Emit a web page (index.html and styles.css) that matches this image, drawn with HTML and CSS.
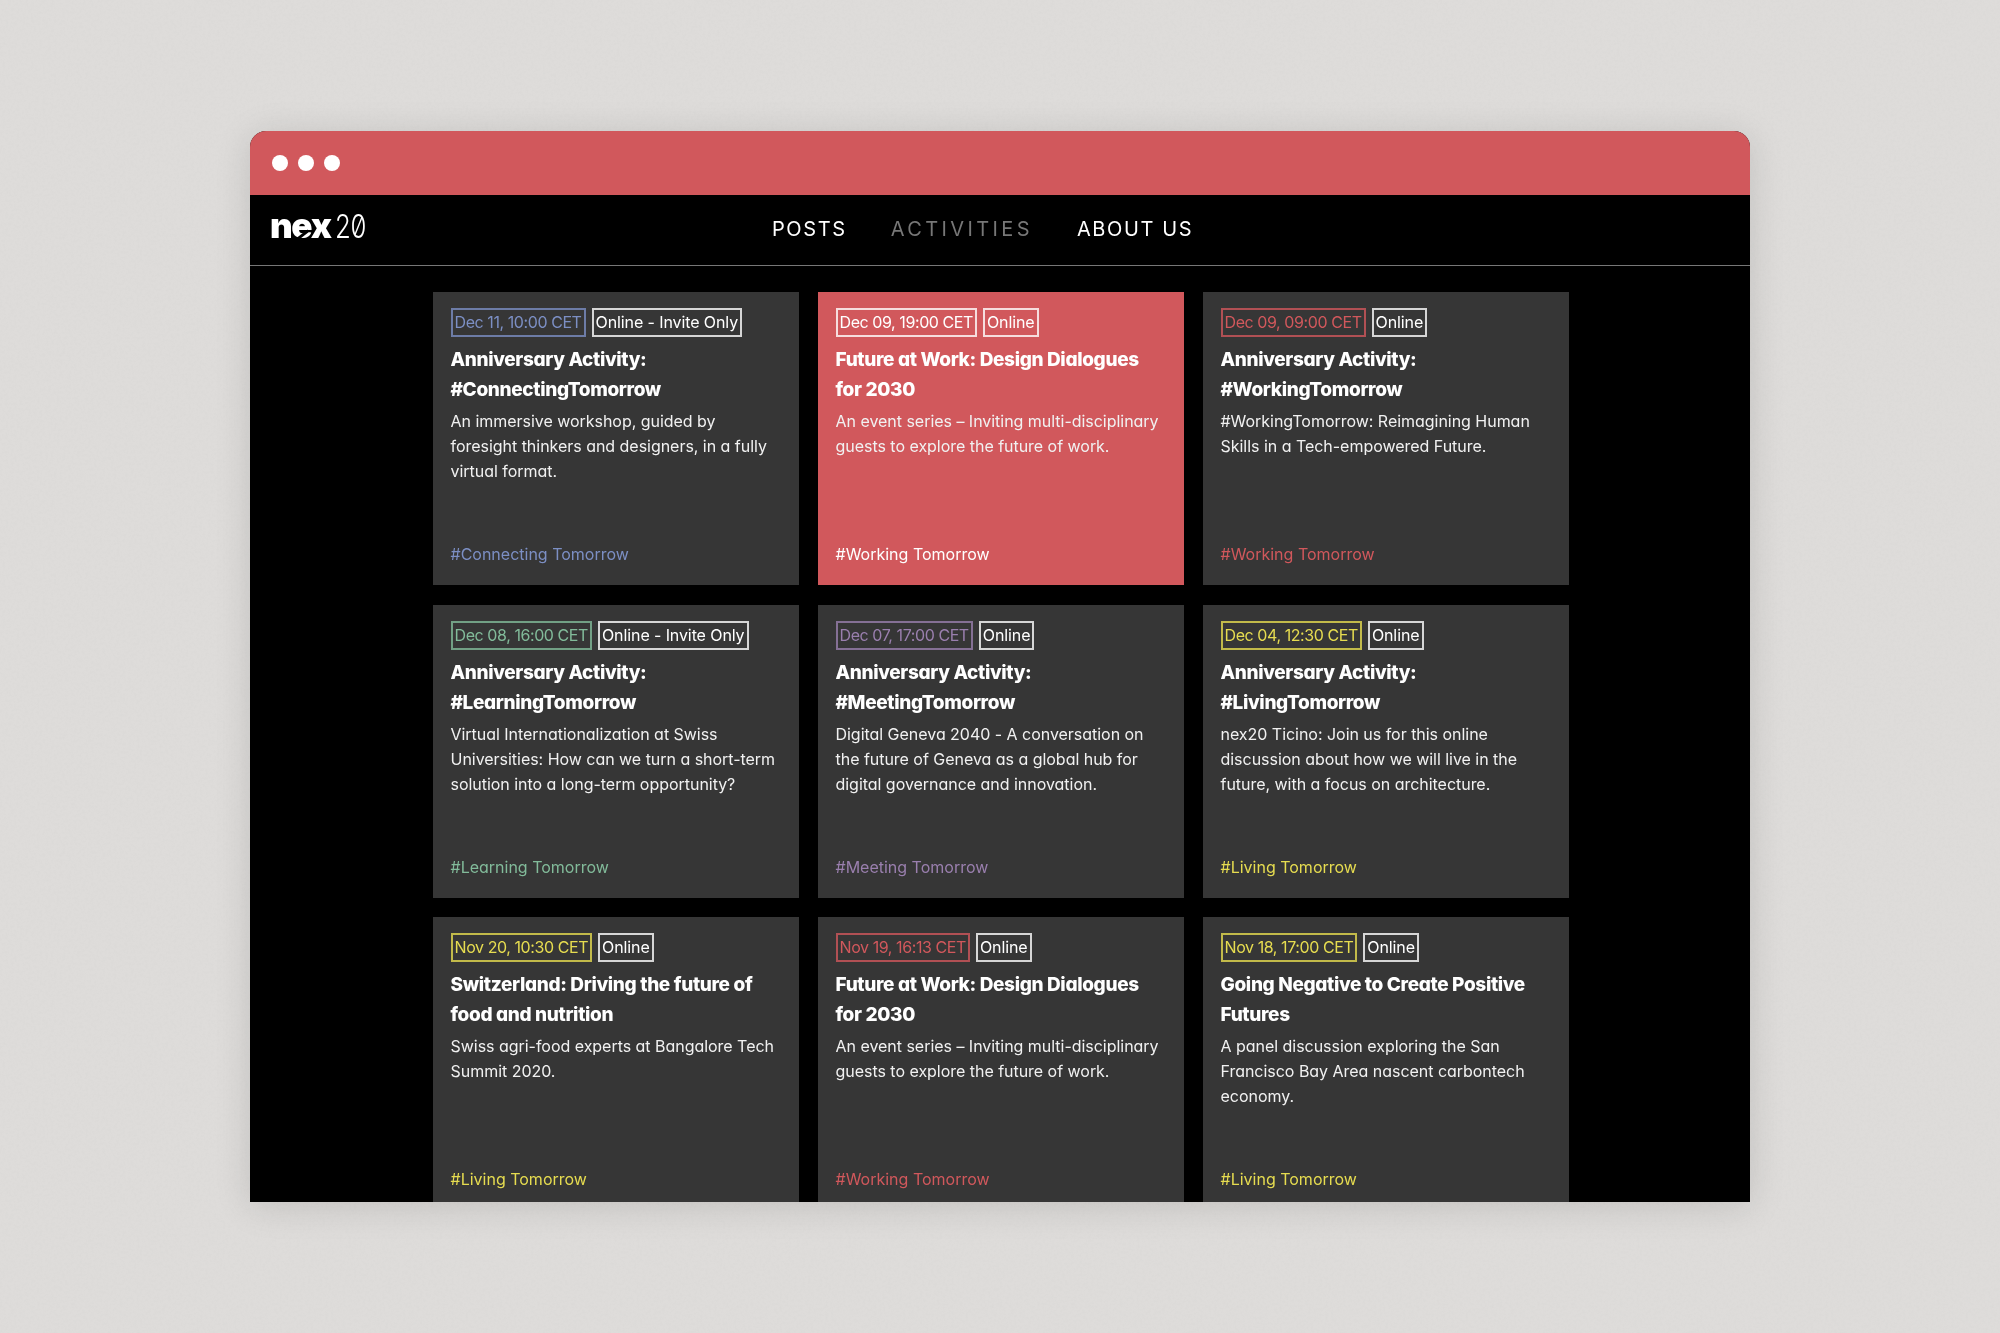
FILE: index.html
```html
<!DOCTYPE html>
<html lang="en">
<head>
    <meta charset="UTF-8">
    <title>nex20 - Activities</title>
    <link rel="stylesheet" href="styles.css">
</head>
<body>
    <div class="window">
        <div class="titlebar">
            <span class="dot"></span>
            <span class="dot"></span>
            <span class="dot"></span>
        </div>

        <header class="header">
            <a class="logo" href="#"><span class="logo-nex">n<span class="logo-e">e</span>x</span><span class="logo-year">20</span></a>
            <nav class="nav">
                <a href="#">POSTS</a>
                <a href="#" class="active">ACTIVITIES</a>
                <a href="#">ABOUT US</a>
            </nav>
        </header>

        <main class="grid">
            <article class="card blue">
                <div class="tags"><span class="tag date">Dec 11, 10:00 CET</span><span class="tag">Online - Invite Only</span></div>
                <h2>Anniversary Activity: #ConnectingTomorrow</h2>
                <p>An immersive workshop, guided by foresight thinkers and designers, in a fully virtual format.</p>
                <div class="topic">#Connecting Tomorrow</div>
            </article>
            <article class="card featured">
                <div class="tags"><span class="tag date">Dec 09, 19:00 CET</span><span class="tag">Online</span></div>
                <h2>Future at Work: Design Dialogues for 2030</h2>
                <p>An event series – Inviting multi-disciplinary guests to explore the future of work.</p>
                <div class="topic">#Working Tomorrow</div>
            </article>
            <article class="card red">
                <div class="tags"><span class="tag date">Dec 09, 09:00 CET</span><span class="tag">Online</span></div>
                <h2>Anniversary Activity: #WorkingTomorrow</h2>
                <p>#WorkingTomorrow: Reimagining Human Skills in a Tech-empowered Future.</p>
                <div class="topic">#Working Tomorrow</div>
            </article>

            <article class="card green">
                <div class="tags"><span class="tag date">Dec 08, 16:00 CET</span><span class="tag">Online - Invite Only</span></div>
                <h2>Anniversary Activity: #LearningTomorrow</h2>
                <p>Virtual Internationalization at Swiss Universities: How can we turn a short-term solution into a long-term opportunity?</p>
                <div class="topic">#Learning Tomorrow</div>
            </article>
            <article class="card purple">
                <div class="tags"><span class="tag date">Dec 07, 17:00 CET</span><span class="tag">Online</span></div>
                <h2>Anniversary Activity: #MeetingTomorrow</h2>
                <p>Digital Geneva 2040 - A conversation on the future of Geneva as a global hub for digital governance and innovation.</p>
                <div class="topic">#Meeting Tomorrow</div>
            </article>
            <article class="card yellow">
                <div class="tags"><span class="tag date">Dec 04, 12:30 CET</span><span class="tag">Online</span></div>
                <h2>Anniversary Activity: #LivingTomorrow</h2>
                <p>nex20 Ticino: Join us for this online discussion about how we will live in the future, with a focus on architecture.</p>
                <div class="topic">#Living Tomorrow</div>
            </article>

            <article class="card yellow">
                <div class="tags"><span class="tag date">Nov 20, 10:30 CET</span><span class="tag">Online</span></div>
                <h2>Switzerland: Driving the future of food and nutrition</h2>
                <p>Swiss agri-food experts at Bangalore Tech Summit 2020.</p>
                <div class="topic">#Living Tomorrow</div>
            </article>
            <article class="card red">
                <div class="tags"><span class="tag date">Nov 19, 16:13 CET</span><span class="tag">Online</span></div>
                <h2>Future at Work: Design Dialogues for 2030</h2>
                <p>An event series – Inviting multi-disciplinary guests to explore the future of work.</p>
                <div class="topic">#Working Tomorrow</div>
            </article>
            <article class="card yellow">
                <div class="tags"><span class="tag date">Nov 18, 17:00 CET</span><span class="tag">Online</span></div>
                <h2>Going Negative to Create Positive Futures</h2>
                <p>A panel discussion exploring the San Francisco Bay Area nascent carbontech economy.</p>
                <div class="topic">#Living Tomorrow</div>
            </article>
        </main>
    </div>
</body>
</html>
```

FILE: styles.css
```css
* {
    margin: 0;
    padding: 0;
    box-sizing: border-box;
}

body {
    font-family: 'Inter', 'Lato', sans-serif;
    font-feature-settings: "cv11";
    background-color: #dedcda;
    background-image: url("data:image/svg+xml,%3Csvg xmlns='http://www.w3.org/2000/svg' width='500' height='500'%3E%3Cfilter id='n'%3E%3CfeTurbulence type='fractalNoise' baseFrequency='0.35' numOctaves='3' seed='4'/%3E%3CfeColorMatrix values='0 0 0 0 0.45 0 0 0 0 0.45 0 0 0 0 0.45 0.5 0 0 0 -0.16'/%3E%3C/filter%3E%3Crect width='500' height='500' filter='url(%23n)' opacity='0.22'/%3E%3C/svg%3E");
    height: 1333px;
    overflow: hidden;
    padding: 131px 250px 0;
}

a {
    color: inherit;
    text-decoration: none;
}

.window {
    width: 1500px;
    height: 1071px;
    background: #000;
    color: #fff;
    border-radius: 16px 16px 0 0;
    overflow: hidden;
    box-shadow: 0 4px 36px rgba(0, 0, 0, 0.13);
    filter: blur(0.35px);
}

.titlebar {
    height: 64px;
    background: #d1585c;
    display: flex;
    align-items: center;
    gap: 10px;
    padding-left: 22px;
}

.dot {
    width: 16px;
    height: 16px;
    border-radius: 50%;
    background: #fff;
}

.header {
    height: 71px;
    border-bottom: 1px solid #777;
    display: flex;
    align-items: flex-start;
    padding-left: 20px;
}

.logo {
    display: flex;
    align-items: baseline;
    width: 502px;
    height: 56px;
    line-height: 60px;
}

.logo-nex {
    font-size: 35px;
    font-weight: 900;
    letter-spacing: -1.6px;
}

.logo-e {
    position: relative;
}

/* diagonal cut through the e of the wordmark */
.logo-e::after {
    content: "";
    position: absolute;
    left: 3px;
    top: 30px;
    width: 16px;
    height: 3px;
    background: #000;
    transform: rotate(-38deg);
}

.logo-year {
    display: inline-block;
    font-size: 33px;
    font-weight: 300;
    font-feature-settings: "zero";
    letter-spacing: -0.5px;
    margin-left: 4px;
    transform: scaleX(0.78);
    transform-origin: left;
}

.nav {
    display: flex;
    gap: 44px;
    font-size: 20px;
    letter-spacing: 1.6px;
    line-height: 68px;
}

.nav .active {
    color: #777;
    letter-spacing: 3.4px;
}

.grid {
    display: grid;
    grid-template-columns: repeat(3, 366px);
    grid-auto-rows: 293px;
    gap: 19.5px 19px;
    justify-content: center;
    padding: 26px 0 0 1px;
}

.card {
    display: flex;
    flex-direction: column;
    background: #363636;
    padding: 16px 18px 19px;
    --accent: #fff;
}

.card.blue { --accent: #7c8fc4; }
.card.red { --accent: #d1585c; }
.card.green { --accent: #82bb9a; }
.card.purple { --accent: #9a7fae; }
.card.yellow { --accent: #e6dc50; }

.card.featured {
    background: #d1585c;
}

.tags {
    display: flex;
    gap: 6px;
    margin-bottom: 8px;
}

.tag {
    border: 2px solid color-mix(in srgb, #fff 80%, transparent);
    height: 29px;
    line-height: 25px;
    padding: 0 2px;
    font-size: 16px;
    letter-spacing: -0.1px;
    white-space: nowrap;
}

.tag.date {
    color: var(--accent);
    border-color: color-mix(in srgb, var(--accent) 80%, transparent);
    letter-spacing: -0.42px;
}

.card.featured .tag.date {
    border-color: color-mix(in srgb, #fff 80%, transparent);
}

.card h2 {
    font-size: 19px;
    font-weight: 800;
    line-height: 30px;
    letter-spacing: -0.35px;
}

.card p {
    font-size: 16px;
    line-height: 25px;
    letter-spacing: -0.03px;
    margin-top: 4px;
    color: #f1f1f1;
}

.topic {
    margin-top: auto;
    font-size: 16px;
    line-height: 24px;
    color: var(--accent);
}
```
